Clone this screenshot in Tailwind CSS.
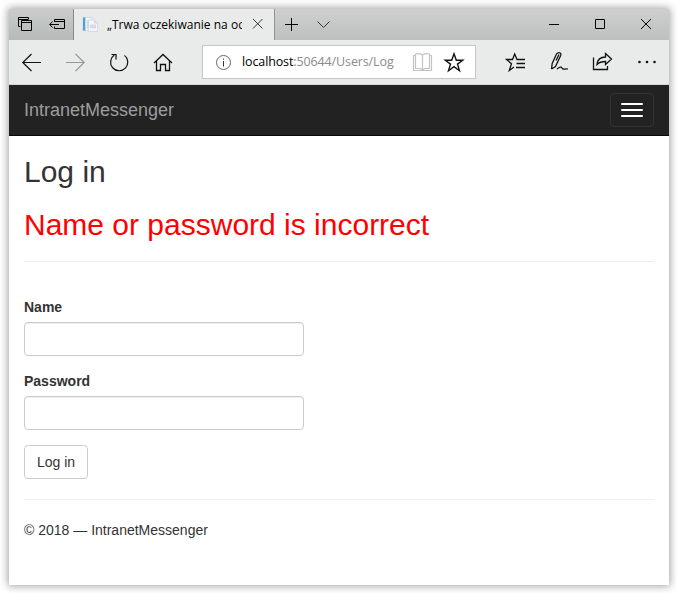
<!DOCTYPE html>
<html lang="pl">
<head>
<meta charset="utf-8">
<title>Log in - IntranetMessenger</title>
<script src="https://cdn.jsdelivr.net/npm/@tailwindcss/browser@4"></script>
</head>
<body class="bg-white p-[9px] pr-2 pb-2 h-[593px] overflow-hidden font-['Liberation_Sans',Arial,sans-serif] text-sm leading-5 text-[#333]">
<div class="h-[576px] w-[660px] flex flex-col bg-white shadow-[0_0_8px_1px_rgba(0,0,0,0.38)]">
  <header class="font-['Open_Sans','Noto_Sans',sans-serif]">
    <div class="flex h-[31px] bg-linear-to-b from-[#cdd0cf] to-[#bcc0bf]">
      <div class="flex w-[65px] shrink-0 border-r border-[#858988] bg-linear-to-b from-[#c9cdcc] to-[#b5b9b8]">
        <svg class="w-8 h-[31px]" viewBox="9 9 32 31" fill="none" stroke="#000" aria-label="Tabs"><path d="M20.500 26.500H18.500V17.500H28.500V19.500M18.500 19.500H28M21.500 20.500H31.500V30.500H21.500ZM21.500 22.500H31.500" /></svg>
        <svg class="w-8 h-[31px]" viewBox="41 9 32 31" fill="none" stroke="#000" aria-label="Set aside tabs"><path d="M54.500 22V19.500H64.500V28.500H54.500V26.500M54.500 21.500H64.500M50 24.500H59M52.500 21.500L49.700 24.500L52.500 27.500" /></svg>
      </div>
      <div class="flex w-[201px] shrink-0 items-center border-r border-[#909493] bg-[#e9ebea]">
        <svg class="ml-[7px] h-[18px] w-[18px] shrink-0" viewBox="0 0 18 18"><path d="M2 1.500H11V14.500H2Z" fill="#f6f8fb" stroke="#ccd2dd" stroke-width=".8"/><path d="M2 1.500H4.300V14.500H2Z" fill="#4ba3d3"/><path d="M5.500 4H9V13H5.500Z" fill="#d6dce6"/><path d="M7.500 4H13.500L16.500 7V15.500H7.500Z" fill="#f3f5f9" stroke="#cbd0dc" stroke-width=".7"/><path d="M13.500 4V7H16.500M9.500 9H14.500V12H9.500Z" fill="#d9dde7" stroke="#c7ccd9" stroke-width=".6"/></svg>
        <div class="ml-[8px] w-[135px] overflow-hidden whitespace-nowrap text-[12px] tracking-[0.02px] text-black">„Trwa oczekiwanie na oc</div>
        <svg class="h-[31px] w-[31px] shrink-0" viewBox="242 9 31 31" fill="none" stroke="#333"><path d="M253 19L262.500 28.500M262.500 19L253 28.500"/></svg>
      </div>
      <svg class="h-[31px] w-[76px] shrink-0" viewBox="275 9 76 31" fill="none" stroke="#000"><path d="M285 24.500H298M291.500 18V31"/><path stroke="#333" d="M317.500 21.500L323.500 27.500L329.500 21.500"/></svg>
      <svg class="ml-auto h-[31px] w-[138px]" viewBox="531 9 138 31" fill="none" stroke="#000"><path d="M549 24.500H559M595.500 19.500H604.500V28.500H595.500ZM641 19L651 29M651 19L641 29"/></svg>
    </div>
    <div class="flex h-[45px] border-b border-[#d3d5d4] bg-[#e9ebea]">
      <svg class="h-[45px] w-[193px] shrink-0" viewBox="9 40 193 45" fill="none" stroke="#111" stroke-width="1.200"><path d="M22.500 62.500H41M31.500 54L22.800 62.500L31.500 71"/><path stroke="#999" d="M66 62.500H84.500M75.500 54L84.200 62.500L75.500 71"/><path d="M124.500 55.400A8.600 8.600 0 1 1 114.300 55.100M111.500 54.500H116V59.500"/><path stroke-width="1.300" d="M154 63L163 54.500L172 63M156.500 61V70.500H160.500V64.500H165.500V70.500H169.500V61"/></svg>
      <div class="mt-[5px] flex h-[34px] w-[274px] shrink-0 items-center border border-[#c5c7c6] bg-white">
        <svg class="h-8 w-[39px] shrink-0" viewBox="203 46 39 32" fill="none" stroke="#666"><circle cx="223.500" cy="62.500" r="7"/><path stroke="#333" d="M223.500 61V66.500M223.500 58.500V59.700"/></svg>
        <div class="w-[157px] overflow-hidden whitespace-nowrap text-[12.500px] tracking-[-0.12px] text-[#8b8b8b]"><span class="text-black">localhost</span>:50644/Users/Log</div>
        <svg class="h-8 w-[76px] shrink-0" viewBox="399 46 76 32" fill="none"><path stroke="#c4c4c4" stroke-width="1.200" d="M422.500 55V70M422.500 55C421 54 417.500 53.500 415.500 54V68.500H420.500L422.500 70.500M422.500 55C424 54 427.500 53.500 429.500 54V68.500H424.500L422.500 70.500M415 55.500H413.500V70.500H431.500V55.500H430"/><path stroke="#111" stroke-width="1.400" d="M454 53.800L456.300 60.200H462.700L457.500 64.100L459.500 70.700L454 66.700L448.500 70.700L450.500 64.100L445.300 60.200H451.700Z"/></svg>
      </div>
      <svg class="ml-auto h-[45px] w-[193px] shrink-0" viewBox="476 40 193 45" fill="none" stroke="#111" stroke-width="1.300"><path d="M525 59.500H517L514.700 54L512.500 59.500H506.500L511.500 63.800L509.300 70.500L514 67M516.500 63.500H525M516 67.500H525"/><path d="M551.500 69L552.200 63.500L556.500 54Q558.500 51.800 560.500 53.200Q561.300 54 560.700 55.500L555.500 66.500L551.500 69M556 60.500L559 54.500M557 69C559.500 67 561.500 66.500 562 68C563 70.500 565 68.500 567.800 69"/><path d="M593.500 57.500V69.500H607.500V66M597 64.500C597.500 59.500 600.500 57 605.500 57V53.500L611.500 59L605.500 64.500V61.500C601.500 61.500 599.500 62 597 64.500Z"/><g fill="#111" stroke="none"><circle cx="639.500" cy="62" r="1.300"/><circle cx="647" cy="62" r="1.300"/><circle cx="654.500" cy="62" r="1.300"/></g></svg>
    </div>
  </header>
  <nav class="flex h-[51px] shrink-0 items-center justify-between border-b border-[#080808] bg-[#222] px-[15px]">
    <a class="text-lg leading-5 text-[#9d9d9d]">IntranetMessenger</a>
    <button class="flex h-[34px] w-11 flex-col items-center justify-center gap-1 rounded border border-[#333]" aria-label="Menu"><span class="h-0.5 w-[22px] rounded-[1px] bg-white"></span><span class="h-0.5 w-[22px] rounded-[1px] bg-white"></span><span class="h-0.5 w-[22px] rounded-[1px] bg-white"></span></button>
  </nav>
  <main class="px-[15px] pt-[19px]">
    <h2 class="text-[30px] leading-[33px]">Log in</h2>
    <h2 class="mt-5 text-[30px] leading-[33px] text-[#f00]">Name or password is incorrect</h2>
    <hr class="mt-5 mb-[35px] border-[#eee]">
    <form>
      <label class="mb-[5px] block font-bold" for="name">Name</label>
      <input id="name" class="mb-[15px] block h-[34px] w-[280px] rounded border border-[#ccc] px-3 shadow-[inset_0_1px_1px_rgba(0,0,0,0.075)]">
      <label class="mb-[5px] block font-bold" for="password">Password</label>
      <input id="password" type="password" class="mb-[15px] block h-[34px] w-[280px] rounded border border-[#ccc] px-3 shadow-[inset_0_1px_1px_rgba(0,0,0,0.075)]">
      <button type="button" class="block h-[34px] w-16 rounded border border-[#ccc]">Log in</button>
    </form>
    <hr class="my-5 border-[#eee]">
    <footer>© 2018 — IntranetMessenger</footer>
  </main>
</div>
</body>
</html>
